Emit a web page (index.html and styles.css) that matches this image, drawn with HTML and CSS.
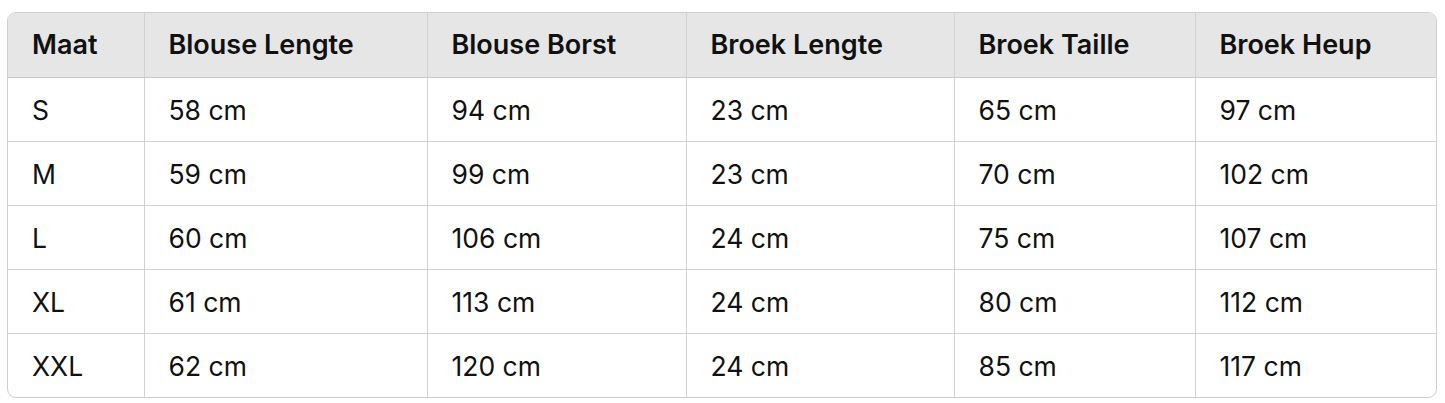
FILE: index.html
```html
<!DOCTYPE html>
<html lang="nl">
<head>
<meta charset="utf-8">
<title>Maattabel</title>
<link rel="stylesheet" href="styles.css">
</head>
<body>
<div class="wrap">
<table class="sizes">
<colgroup>
<col class="c1"><col class="c2"><col class="c3"><col class="c4"><col class="c5"><col class="c6">
</colgroup>
<thead>
<tr><th>Maat</th><th>Blouse Lengte</th><th>Blouse Borst</th><th>Broek Lengte</th><th>Broek Taille</th><th>Broek Heup</th></tr>
</thead>
<tbody>
<tr><td>S</td><td>58 cm</td><td>94 cm</td><td>23 cm</td><td>65 cm</td><td>97 cm</td></tr>
<tr><td>M</td><td>59 cm</td><td>99 cm</td><td>23 cm</td><td>70 cm</td><td>102 cm</td></tr>
<tr><td>L</td><td>60 cm</td><td>106 cm</td><td>24 cm</td><td>75 cm</td><td>107 cm</td></tr>
<tr><td>XL</td><td>61 cm</td><td>113 cm</td><td>24 cm</td><td>80 cm</td><td>112 cm</td></tr>
<tr><td>XXL</td><td>62 cm</td><td>120 cm</td><td>24 cm</td><td>85 cm</td><td>117 cm</td></tr>
</tbody>
</table>
</div>
</body>
</html>
```
FILE: styles.css
```css
html, body { margin: 0; padding: 0; background: #fff; }
body { padding: 12px 8px 0 7px; font-family: Inter, "Liberation Sans", sans-serif; color: #111; }
.wrap {
  width: 1430px;
  box-sizing: border-box;
  border: 1.5px solid #cfcfcf;
  border-radius: 9px;
  overflow: hidden;
}
.sizes { width: 100%; border-collapse: collapse; table-layout: fixed; }
.c1 { width: 136px; } .c2 { width: 283px; } .c3 { width: 259px; }
.c4 { width: 268px; } .c5 { width: 241px; } .c6 { width: auto; }
.sizes th, .sizes td {
  height: 64px;
  box-sizing: border-box;
  padding: 0 24px;
  text-align: left;
  font-size: 26.5px;
  line-height: 30px;
  border-left: 1.5px solid #d2d2d2;
  border-top: 1.5px solid #d2d2d2;
}
.sizes th { background: #e6e6e6; font-weight: 600; font-size: 27px; border-top: none; height: 64px; }
.sizes td { font-weight: 400; padding-top: 2px; }
.sizes th:first-child, .sizes td:first-child { border-left: none; }
.sizes thead th { border-bottom: 1.5px solid #cacaca; }
```
